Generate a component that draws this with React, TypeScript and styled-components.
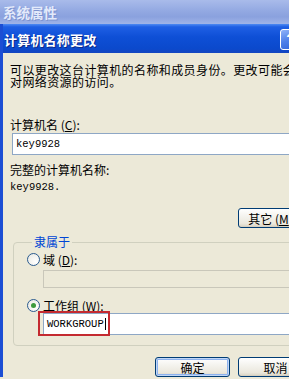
import React from 'react';
import styled, { createGlobalStyle } from 'styled-components';

const Global = createGlobalStyle`
  html, body { margin: 0; padding: 0; }
  body {
    width: 289px;
    height: 379px;
    overflow: hidden;
    background: #ece9d8;
    font-family: "Noto Sans CJK SC", "Liberation Sans", sans-serif;
    font-size: 12px;
    color: #000;
  }
`;

const Page = styled.div`
  width: 289px;
  height: 379px;
  overflow: hidden;
  display: flex;
  flex-direction: column;
  background: #ece9d8;
`;

const OuterTitle = styled.div`
  flex: none;
  height: 24px;
  padding-left: 3px;
  line-height: 24px;
  font-size: 13.5px;
  font-weight: bold;
  color: #e3eafb;
  text-shadow: 1px 1px 0 #7d93cf;
  background: linear-gradient(180deg, #a9bbea 0%, #93a9e2 45%, #8aa1de 70%, #a0b4e8 100%);
`;

const Dialog = styled.div`
  flex: none;
  width: 322px;
  display: flex;
  flex-direction: column;
  border-left: 3px solid #1c4ed4;
  background: #ece9d8;
`;

const TitleBar = styled.div`
  height: 29px;
  display: flex;
  align-items: center;
  justify-content: space-between;
  padding: 2px 0 0 1px;
  box-sizing: border-box;
  background: linear-gradient(180deg, #4f8af2 0%, #1f5fe4 10%, #0e4fd6 45%, #0b49cc 85%, #1546c0 100%);
`;

const TitleText = styled.span`
  color: #fff;
  font-size: 13px;
  font-weight: bold;
  letter-spacing: 0.2px;
  text-shadow: 1px 1px 0 #0a2a8a;
`;

const HelpButton = styled.div`
  width: 21px;
  height: 21px;
  margin-right: 24px;
  border: 1px solid #fff;
  border-radius: 3px;
  box-sizing: border-box;
  background: linear-gradient(160deg, #8fb3f8 0%, #4d7fe9 50%, #2f63d8 100%);
  color: #fff;
  font-family: "Liberation Sans", sans-serif;
  font-weight: bold;
  font-size: 14px;
  line-height: 19px;
  text-align: center;
`;

const Body = styled.div`
  padding: 11px 12px 0 7px;
  display: flex;
  flex-direction: column;
  align-items: flex-start;
`;

const Desc = styled.div`
  line-height: 12px;
  white-space: nowrap;
  letter-spacing: 0.4px;
`;

const Label = styled.div<{ $top: number }>`
  margin-top: ${p => p.$top}px;
  line-height: 12px;
  white-space: nowrap;
`;

const Mono = styled.span`
  font-family: "Liberation Mono", monospace;
  font-size: 10.5px;
`;

const TextBox = styled.div<{ $disabled?: boolean; $h?: number }>`
  align-self: stretch;
  height: ${p => p.$h ?? 22}px;
  box-sizing: border-box;
  border: 1px solid ${p => (p.$disabled ? '#c9c7ba' : '#8ea7c5')};
  background: ${p => (p.$disabled ? '#ece9d8' : '#fff')};
  display: flex;
  align-items: center;
  padding-left: 3px;
  font-family: "Liberation Mono", monospace;
  font-size: 10.5px;
`;

const NameBox = styled(TextBox)`
  margin: 2px 0 0 2px;
`;

const Button = styled.div<{ $default?: boolean }>`
  width: 75px;
  height: 20px;
  box-sizing: border-box;
  border: 1px solid #003c74;
  border-radius: 3px;
  display: flex;
  align-items: center;
  justify-content: center;
  font-size: 12px;
  background: linear-gradient(180deg, #ffffff 0%, #f4f3ee 40%, #ebe8dd 80%, #d8d2c2 100%);
  box-shadow: ${p =>
    p.$default ? 'inset 0 0 0 1px #c0d6f6, inset 0 0 0 2px #8db2ee' : 'inset -1px -1px 0 #d6d0c0'};
`;

const OtherButton = styled(Button)`
  align-self: flex-end;
  margin-top: 15px;
  white-space: nowrap;
`;

const Group = styled.fieldset`
  align-self: stretch;
  margin: 8px 0 0 3px;
  padding: 5px 0 10px 13px;
  border: 1px solid #d0d0bf;
  border-radius: 4px;
  display: flex;
  flex-direction: column;
  align-items: stretch;
`;

const Legend = styled.legend`
  margin-left: 5px;
  padding: 0 2px;
  line-height: 12px;
  color: #0046d5;
`;

const RadioRow = styled.div<{ $top: number }>`
  margin-top: ${p => p.$top}px;
  display: flex;
  align-items: center;
  gap: 3px;
  line-height: 13px;
`;

const RadioCircle = styled.span<{ $checked?: boolean }>`
  width: 13px;
  height: 13px;
  box-sizing: border-box;
  border-radius: 50%;
  border: 1px solid #2a5b8f;
  background: radial-gradient(circle at 70% 70%, #ffffff 0%, #e8e7e0 100%);
  display: flex;
  align-items: center;
  justify-content: center;
  &::after {
    content: '';
    display: ${p => (p.$checked ? 'block' : 'none')};
    width: 5px;
    height: 5px;
    border-radius: 50%;
    background: #3d9a3d;
  }
`;

const Indented = styled.div<{ $top: number }>`
  margin: ${p => p.$top}px 0 0 16px;
  display: flex;
  flex-direction: column;
  position: relative;
`;

const Annotation = styled.div`
  position: absolute;
  left: -5px;
  top: -2px;
  width: 72px;
  height: 25px;
  box-sizing: border-box;
  border: 2px solid #c42a30;
  pointer-events: none;
`;

const Caret = styled.span`
  display: inline-block;
  width: 1px;
  height: 12px;
  background: #000;
  margin-left: 1px;
`;

const ButtonRow = styled.div`
  align-self: stretch;
  display: flex;
  justify-content: flex-end;
  gap: 8px;
  margin-top: 11px;
`;

export default function App() {
  return (
    <Page>
      <Global />
      <OuterTitle>系统属性</OuterTitle>
      <Dialog>
        <TitleBar>
          <TitleText>计算机名称更改</TitleText>
          <HelpButton>?</HelpButton>
        </TitleBar>
        <Body>
          <Desc>可以更改这台计算机的名称和成员身份。更改可能会</Desc>
          <Desc>对网络资源的访问。</Desc>
          <Label $top={31}>
            计算机名 (<u>C</u>):
          </Label>
          <NameBox>key9928</NameBox>
          <Label $top={9}>完整的计算机名称:</Label>
          <Label $top={3}>
            <Mono>key9928.</Mono>
          </Label>
          <OtherButton>
            其它 (<u>M</u>)...
          </OtherButton>
          <Group>
            <Legend>隶属于</Legend>
            <RadioRow $top={0}>
              <RadioCircle />
              <span>
                域 (<u>D</u>):
              </span>
            </RadioRow>
            <Indented $top={4}>
              <TextBox $disabled $h={18} />
            </Indented>
            <RadioRow $top={11}>
              <RadioCircle $checked />
              <span>
                工作组 (<u>W</u>):
              </span>
            </RadioRow>
            <Indented $top={1}>
              <TextBox>
                WORKGROUP
                <Caret />
              </TextBox>
              <Annotation />
            </Indented>
          </Group>
          <ButtonRow>
            <Button $default>确定</Button>
            <Button>取消</Button>
          </ButtonRow>
        </Body>
      </Dialog>
    </Page>
  );
}
